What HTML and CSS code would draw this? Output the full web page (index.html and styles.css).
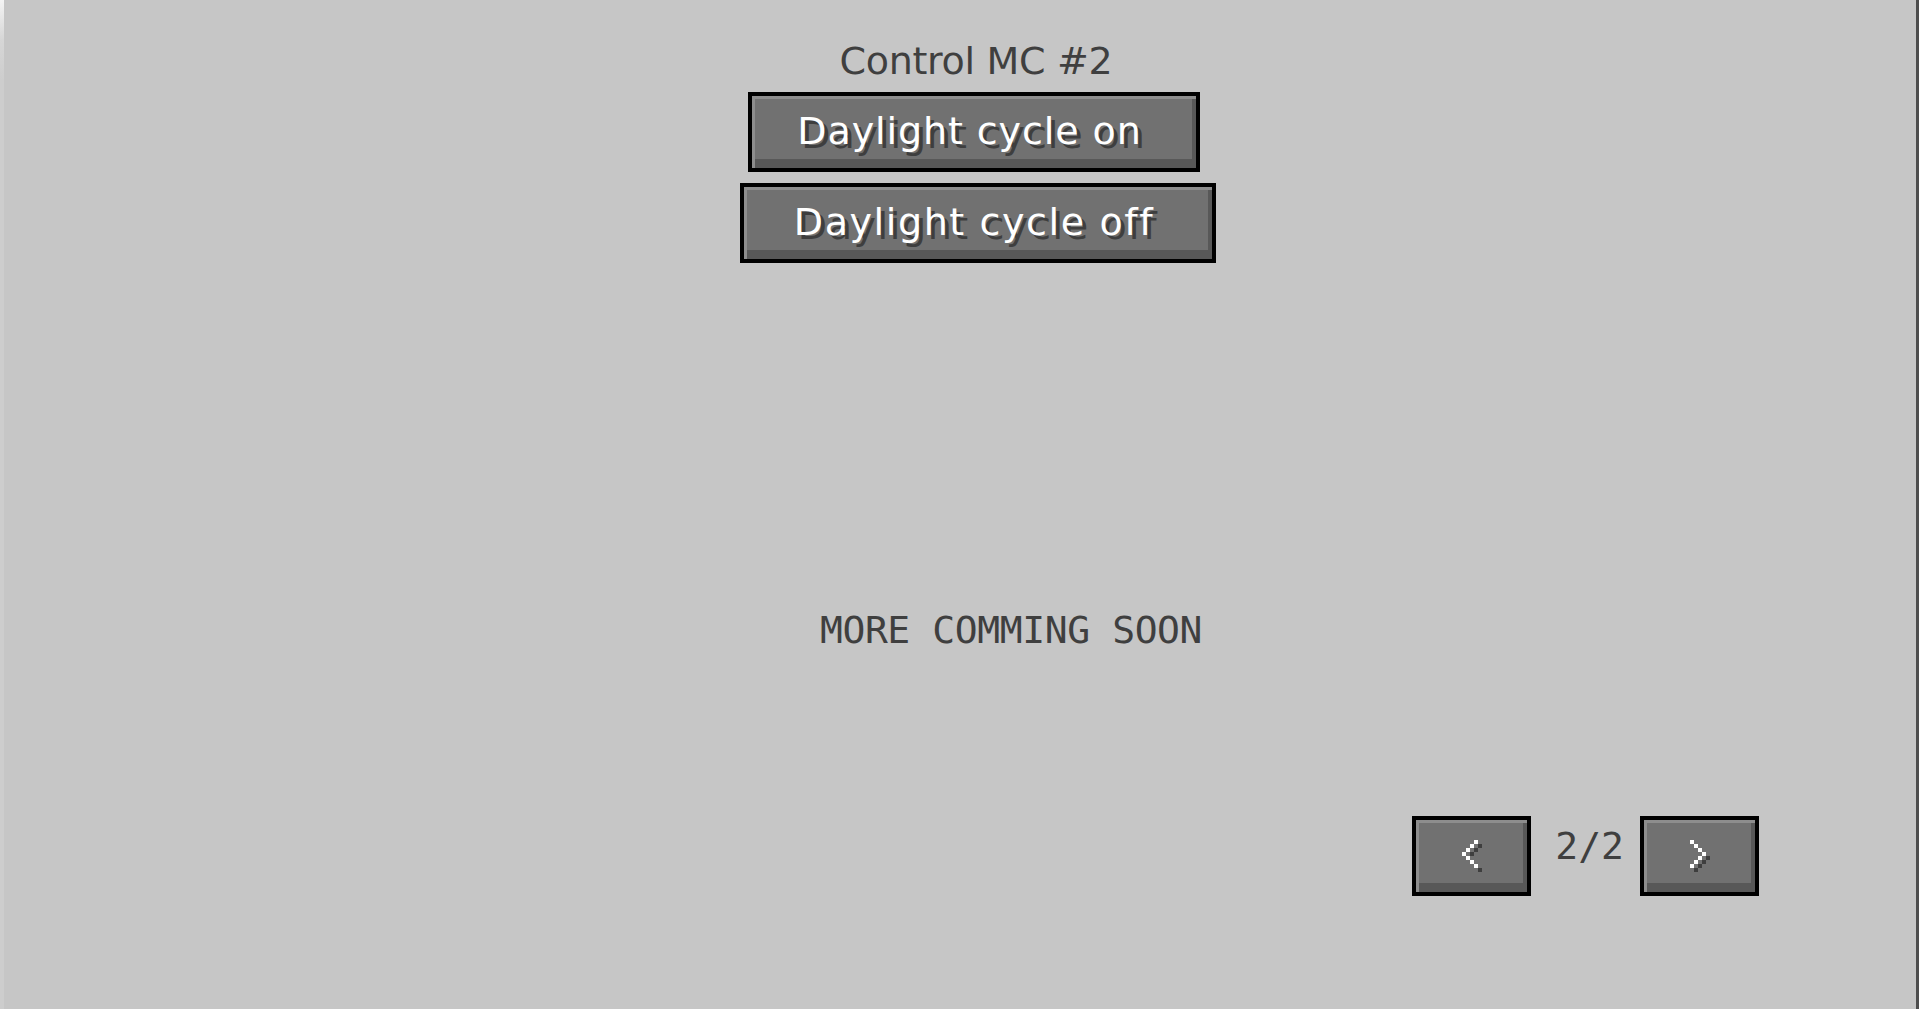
FILE: index.html
```html
<!DOCTYPE html>
<html lang="en">
<head>
<meta charset="utf-8">
<title>Control MC #2</title>
<link rel="stylesheet" href="styles.css">
</head>
<body>
<div class="screen">
  <div class="edge-left"></div>
  <main class="main">
    <div class="column">
      <h1 class="title">Control MC #2</h1>
      <button class="mc-btn btn-on"><span class="label label-on">Daylight cycle on</span></button>
      <button class="mc-btn btn-off"><span class="label label-off">Daylight cycle off</span></button>
    </div>
    <p class="soon">MORE COMMING SOON</p>
    <div class="pager">
      <button class="mc-btn page-btn" aria-label="Previous">
        <svg width="20" height="32" viewBox="0 0 5 8" shape-rendering="crispEdges">
          <g fill="#3e3e3e">
            <rect x="4" y="1" width="1" height="1"/><rect x="3" y="2" width="1" height="1"/><rect x="2" y="3" width="1" height="1"/><rect x="1" y="4" width="1" height="1"/><rect x="2" y="5" width="1" height="1"/><rect x="3" y="6" width="1" height="1"/><rect x="4" y="7" width="1" height="1"/>
          </g>
          <g fill="#ffffff">
            <rect x="3" y="0" width="1" height="1"/><rect x="2" y="1" width="1" height="1"/><rect x="1" y="2" width="1" height="1"/><rect x="0" y="3" width="1" height="1"/><rect x="1" y="4" width="1" height="1"/><rect x="2" y="5" width="1" height="1"/><rect x="3" y="6" width="1" height="1"/>
          </g>
        </svg>
      </button>
      <span class="page-num">2/2</span>
      <button class="mc-btn page-btn" aria-label="Next">
        <svg width="20" height="32" viewBox="0 0 5 8" shape-rendering="crispEdges">
          <g fill="#3e3e3e">
            <rect x="1" y="1" width="1" height="1"/><rect x="2" y="2" width="1" height="1"/><rect x="3" y="3" width="1" height="1"/><rect x="4" y="4" width="1" height="1"/><rect x="3" y="5" width="1" height="1"/><rect x="2" y="6" width="1" height="1"/><rect x="1" y="7" width="1" height="1"/>
          </g>
          <g fill="#ffffff">
            <rect x="0" y="0" width="1" height="1"/><rect x="1" y="1" width="1" height="1"/><rect x="2" y="2" width="1" height="1"/><rect x="3" y="3" width="1" height="1"/><rect x="2" y="4" width="1" height="1"/><rect x="1" y="5" width="1" height="1"/><rect x="0" y="6" width="1" height="1"/>
          </g>
        </svg>
      </button>
    </div>
  </main>
  <div class="edge-right"></div>
</div>
</body>
</html>
```

FILE: styles.css
```css
html, body {
  margin: 0;
  padding: 0;
  width: 1919px;
  height: 1009px;
  overflow: hidden;
  background: #c6c6c6;
}

.screen {
  display: flex;
  width: 1919px;
  height: 1009px;
}

.edge-left {
  width: 4px;
  flex: none;
  background: linear-gradient(to bottom, #f4f4f4 0px, #d6d6d6 40px, #cdcdcd 80px, #cdcdcd 100%);
}

.edge-right {
  width: 3px;
  flex: none;
  background: #4d4d4d;
}

.main {
  flex: 1;
  display: flex;
  flex-direction: column;
  background: #c6c6c6;
}

.column {
  display: flex;
  flex-direction: column;
  align-items: center;
  padding-left: 32px;
  padding-top: 42px;
}

.title {
  margin: 0;
  font-family: "DejaVu Sans", sans-serif;
  font-weight: normal;
  font-size: 38px;
  line-height: 38px;
  letter-spacing: -0.3px;
  color: #3f3f3f;
}

.mc-btn {
  box-sizing: border-box;
  height: 80px;
  padding: 0;
  border: 4px solid #000;
  background: #717171;
  box-shadow: inset 3px 3px 0 #8d8d8d, inset -4px -9px 0 #585858;
  display: flex;
  align-items: center;
  justify-content: center;
  cursor: pointer;
}

.btn-on {
  width: 452px;
  margin-top: 12px;
  margin-left: -5px;
}

.btn-off {
  width: 476px;
  margin-top: 11px;
  margin-left: 4px;
}

.label {
  font-family: "DejaVu Sans", sans-serif;
  font-size: 38px;
  line-height: 38px;
  color: #ffffff;
  text-shadow: 4px 4px 0 #3e3e3e;
  padding-bottom: 3px;
  padding-right: 8px;
  white-space: nowrap;
}

.label-on {
  letter-spacing: 0.9px;
}

.label-off {
  letter-spacing: 1.6px;
}

.soon {
  margin: 348px 0 0 0;
  padding-left: 102px;
  text-align: center;
  font-family: "DejaVu Sans Mono", monospace;
  font-size: 38px;
  line-height: 38px;
  letter-spacing: -0.4px;
  color: #3f3f3f;
}

.pager {
  display: flex;
  justify-content: flex-end;
  align-items: flex-start;
  margin-top: 167px;
  padding-right: 157px;
}

.page-btn {
  width: 119px;
}

.page-btn svg {
  display: block;
}

.page-num {
  margin: 11px 16px 0 24px;
  font-family: "DejaVu Sans Mono", monospace;
  font-size: 38px;
  line-height: 38px;
  color: #3f3f3f;
}
```
